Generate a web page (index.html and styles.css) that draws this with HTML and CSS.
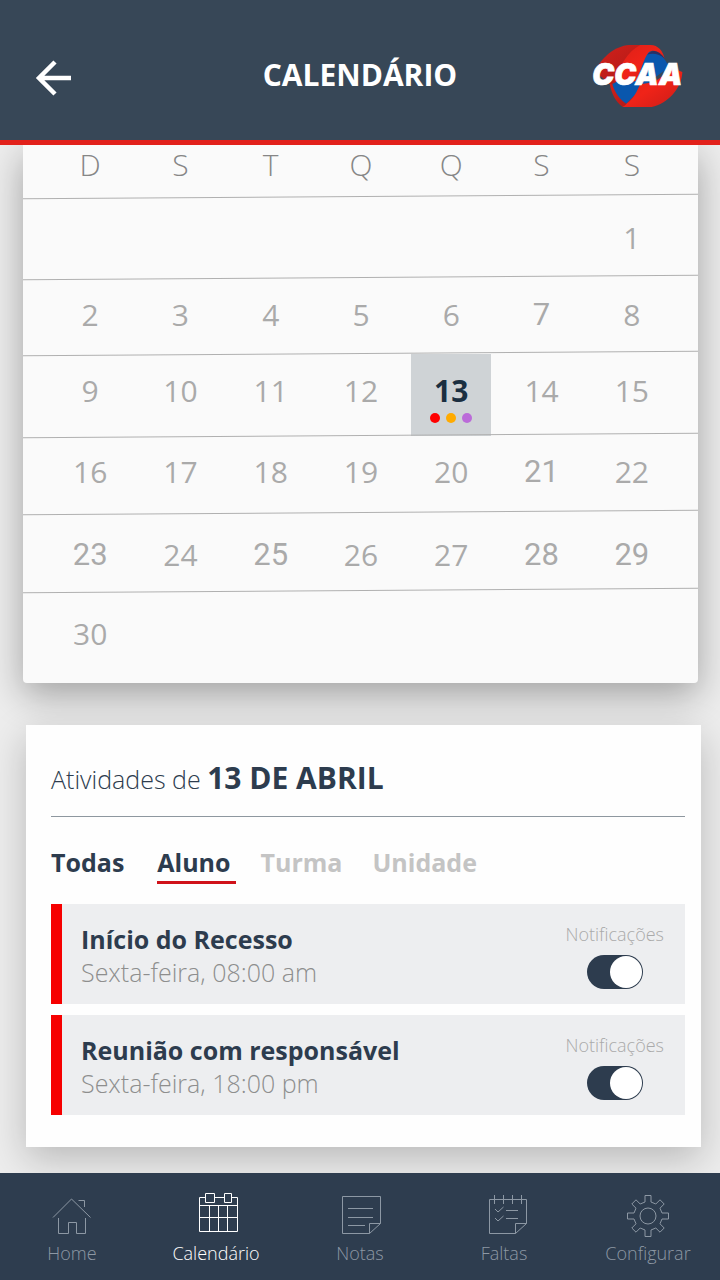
FILE: index.html
```html
<!DOCTYPE html>
<html lang="pt-BR">
<head>
<meta charset="utf-8">
<meta name="viewport" content="width=device-width, initial-scale=1">
<title>Calendário</title>
<link rel="stylesheet" href="styles.css">
</head>
<body>
<div class="app">
  <header class="topbar">
    <button class="back" type="button" aria-label="Voltar">
      <svg width="36" height="36" viewBox="0 0 36 36" fill="none" stroke="#fff" stroke-width="4.500"><path d="M36 18H4M20 2L4 18L20 34"/></svg>
    </button>
    <h1 class="topbar-title">CALENDÁRIO</h1>
    <svg class="logo" width="96" height="66" viewBox="84 60 288 198" role="img" aria-label="CCAA">
      <defs>
        <linearGradient id="red" x1="0" y1="0" x2="1" y2="1"><stop offset="0" stop-color="#d92018"/><stop offset=".5" stop-color="#f02318"/><stop offset="1" stop-color="#c91d18"/></linearGradient>
        <linearGradient id="dark" x1="0" y1="0" x2="1" y2="1"><stop offset="0" stop-color="#d3201a"/><stop offset="1" stop-color="#a91a18"/></linearGradient>
      </defs>
      <path fill="url(#dark)" d="M102 148C120 108 160 72 205 69H262L200 190H150Z"/>
      <path fill="url(#dark)" d="M146 185C152 215 164 240 184 254H226L240 210Z"/>
      <path fill="#0a57ad" d="M262 90C290 86 312 106 324 136L250 190L196 245C176 232 160 210 154 186L222 150Z"/>
      <path fill="#2b2f63" d="M258 98C276 80 296 84 312 110C296 96 276 92 258 98Z"/>
      <path fill="url(#red)" d="M160 178C178 130 200 88 238 69H268C292 69 306 88 311 110C298 88 276 80 262 92C248 108 240 150 224 178Z"/>
      <path fill="url(#red)" d="M324 134L364 150C362 200 320 245 272 255H184C190 253 194 250 198 244C220 228 228 206 238 186C262 184 300 182 324 134Z"/>
      <text class="logo-text" x="94" y="188">CCAA</text>
    </svg>
  </header>

  <main class="content">
    <section class="calendar" aria-label="Abril">
      <table class="month">
        <thead>
          <tr><th>D</th><th>S</th><th>T</th><th>Q</th><th>Q</th><th>S</th><th>S</th></tr>
        </thead>
        <tbody>
          <tr class="tall"><td></td><td></td><td></td><td></td><td></td><td></td><td>1</td></tr>
          <tr class="short"><td>2</td><td>3</td><td>4</td><td>5</td><td>6</td><td class="alt">7</td><td>8</td></tr>
          <tr class="current"><td>9</td><td>10</td><td>11</td><td>12</td><td class="selected"><div class="day">13<span class="dots"><i class="dot red"></i><i class="dot amber"></i><i class="dot purple"></i></span></div></td><td>14</td><td>15</td></tr>
          <tr class="high"><td>16</td><td>17</td><td>18</td><td>19</td><td>20</td><td class="alt">21</td><td>22</td></tr>
          <tr class="low"><td class="alt">23</td><td>24</td><td class="alt">25</td><td>26</td><td>27</td><td class="alt">28</td><td class="alt">29</td></tr>
          <tr class="last"><td>30</td><td></td><td></td><td></td><td></td><td></td><td></td></tr>
        </tbody>
      </table>
    </section>

    <section class="activities">
      <h2 class="activities-title">Atividades de <strong>13 DE ABRIL</strong></h2>
      <div class="tabs">
        <button class="tab all" type="button">Todas</button>
        <button class="tab active" type="button">Aluno</button>
        <button class="tab muted" type="button">Turma</button>
        <button class="tab muted" type="button">Unidade</button>
      </div>
      <ul class="events">
        <li class="event">
          <div class="event-text">
            <h3 class="event-name">Início do Recesso</h3>
            <p class="event-time">Sexta-feira, 08:00 am</p>
          </div>
          <div class="notify">
            <label class="notify-label" for="n1">Notificações</label>
            <input class="switch" type="checkbox" id="n1" checked>
          </div>
        </li>
        <li class="event">
          <div class="event-text">
            <h3 class="event-name">Reunião com responsável</h3>
            <p class="event-time">Sexta-feira, 18:00 pm</p>
          </div>
          <div class="notify">
            <label class="notify-label" for="n2">Notificações</label>
            <input class="switch" type="checkbox" id="n2" checked>
          </div>
        </li>
      </ul>
    </section>
  </main>

  <nav class="bottom-nav">
    <a class="nav-item" href="#home">
      <svg class="nav-icon" viewBox="0 0 44 44"><path d="M3 25.500L21.500 7L40.500 25.500M8.500 26V41.500H18.500V30.500H26.500V41.500H35.500V26M28.500 8.500H34.500V15"/></svg>
      <span>Home</span>
    </a>
    <a class="nav-item current-page" href="#calendario" aria-current="page">
      <svg class="nav-icon" viewBox="0 0 44 44"><path d="M11 5.500H5.500V39.500H43.500V5.500H37.500M20.500 5.500H30.500M11.500 1.500H20.500V10.500H11.500ZM30.500 1.500H37.500V10.500H30.500ZM5.500 13.500H43.500M5.500 25.500H43.500M15.500 13.500V39.500M24.500 13.500V39.500M33.500 13.500V39.500"/></svg>
      <span>Calendário</span>
    </a>
    <a class="nav-item" href="#notas">
      <svg class="nav-icon" viewBox="0 0 44 44"><path d="M42.500 31.500V4.500H4.500V41.500H31.500L42.500 31.500H31.500V41.500M10 16.500H35M10 25.500H35M10 33.500H27"/></svg>
      <span>Notas</span>
    </a>
    <a class="nav-item" href="#faltas">
      <svg class="nav-icon" viewBox="0 0 44 44"><path d="M44.500 31.500V7.500H7.500V41.500H33.500L44.500 31.500H33.500V41.500M12.500 3V12M21.500 3V12M30.500 3V12M39.500 3V12M13 17L16 20L21.500 15M13 26L16 29L21.500 24M24 18.500H36M24 26.500H36"/></svg>
      <span>Faltas</span>
    </a>
    <a class="nav-item" href="#configurar">
      <svg class="nav-icon" viewBox="0 0 44 44"><g transform="translate(22 24)"><path d="M-3 -14V-20.500H3V-14L7.800 -12L12 -16.200L16.200 -12L12 -7.800L14 -3H20.500V3H14L12 7.800L16.200 12L12 16.200L7.800 12L3 14V20.500H-3V14L-7.800 12L-12 16.200L-16.200 12L-12 7.800L-14 3H-20.500V-3H-14L-12 -7.800L-16.200 -12L-12 -16.200L-7.800 -12Z"/><circle r="8"/></g></svg>
      <span>Configurar</span>
    </a>
  </nav>
</div>
</body>
</html>
```

FILE: styles.css
```css
* { box-sizing: border-box; }

body {
  margin: 0;
  background: #ededed;
  font-family: "Open Sans", "Noto Sans", sans-serif;
  color: #2d3c4e;
}

h1, h2, h3, p, ul { margin: 0; padding: 0; }

button {
  border: 0;
  padding: 0;
  background: none;
  font: inherit;
  color: inherit;
  cursor: pointer;
}

.app {
  min-height: 100vh;
  display: flex;
  flex-direction: column;
}

/* Header */
.topbar {
  position: relative;
  z-index: 1;
  display: grid;
  grid-template-columns: 1fr auto 1fr;
  align-items: center;
  height: 145px;
  padding: 10px 35px 0 35px;
  background: #374757;
  border-bottom: 5px solid #e2211b;
  color: #fff;
}
.back { justify-self: start; height: 36px; margin-top: 6px; }
.back svg { display: block; }
.topbar-title { font-size: 30px; line-height: 40px; font-weight: 700; }
.logo { justify-self: end; }
.logo-text {
  font-family: Inter, "Liberation Sans", sans-serif;
  font-size: 88px;
  font-weight: 900;
  font-style: italic;
  fill: #fff;
  stroke: #fff;
  stroke-width: 2;
}

.content {
  flex: 1;
  display: flex;
  flex-direction: column;
  gap: 42px;
  padding: 0 19px 26px 23px;
}

/* Month */
.calendar {
  margin-right: 3px;
  padding: 0 21px 0 22px;
  background: #fafafa;
  border-radius: 0 0 4px 4px;
  box-shadow: 0 12px 36px rgba(0, 0, 0, 0.32);
}
.month {
  width: 100%;
  table-layout: fixed;
  border-collapse: collapse;
  font-size: 30px;
  line-height: 36px;
  color: #aaa;
  text-align: center;
}
.month tr { position: relative; height: 77px; }
.month th, .month td { padding: 0; }
.month th { padding-bottom: 12px; font-weight: 300; color: #868686; }
.month thead tr { height: 52px; }
.month .tall { height: 81px; }
.month .short { height: 76px; }
.month .short td { padding-bottom: 2px; }
.month .current { height: 82px; }
.month .current td { padding-bottom: 8px; }
.month .high td { padding-bottom: 6px; }
.month .low { height: 78px; }
.month .low td { padding-top: 6px; }
.month .last { height: 92px; }
.month .last td { padding-bottom: 6px; }
.month tr:not(.last) > :first-child::after {
  content: "";
  position: absolute;
  left: -22px;
  right: -21px;
  bottom: 0;
  height: 1px;
  background: #b0b0b0;
  transform: skewY(-0.4deg);
}
.month .alt { font-family: Roboto, sans-serif; font-size: 31px; }
.month .current .selected { padding: 0; font-weight: 700; color: #1b2f41; }
.day {
  display: flex;
  flex-direction: column;
  align-items: center;
  justify-content: center;
  gap: 4px;
  width: 80px;
  height: 82px;
  margin: 0 auto;
  padding-top: 6px;
  background: #cfd3d6;
}
.dots { display: flex; gap: 6px; }
.dot { width: 10px; height: 10px; border-radius: 50%; }
.red { background: #f00; }
.amber { background: #ffab00; }
.purple { background: #bb6bd9; }

/* Activities */
.activities {
  margin-left: 3px;
  padding: 31px 16px 32px 25px;
  background: #fefefe;
  box-shadow: 0 12px 36px rgba(0, 0, 0, 0.22);
}
.activities-title {
  padding-bottom: 15px;
  border-bottom: 1px solid #8e979f;
  font-size: 25px;
  line-height: 44px;
  font-weight: 300;
}
.activities-title strong { font-size: 30px; font-weight: 700; }
.tabs {
  display: flex;
  gap: 25px;
  margin: 26px 0 20px;
  font-size: 25px;
  line-height: 38px;
  font-weight: 700;
}
.tab { height: 41px; padding-bottom: 1px; border-bottom: 3px solid transparent; }
.all { margin-right: 8px; }
.active { padding-right: 5px; border-color: #d0121a; }
.muted { color: #c4c4c4; }
.muted + .muted { margin-left: 5px; }

.events { display: grid; gap: 11px; list-style: none; }
.event {
  display: flex;
  justify-content: space-between;
  height: 100px;
  padding: 18px 21px 0 19px;
  border-left: 11px solid #f60000;
  background: #edeef0;
}
.event-name { font-size: 25px; line-height: 35px; font-weight: 700; }
.event-time { font-size: 25px; line-height: 30px; font-weight: 300; color: #8e8e8e; }
.notify { display: flex; flex-direction: column; align-items: center; gap: 9px; }
.notify-label { font-size: 18px; line-height: 24px; font-weight: 300; color: #aaa; }
.switch {
  appearance: none;
  display: flex;
  justify-content: flex-start;
  align-items: center;
  width: 56px;
  height: 34px;
  margin: 0;
  padding: 1px;
  border-radius: 17px;
  background: #9aa3ab;
}
.switch::before {
  content: "";
  width: 32px;
  height: 32px;
  border-radius: 50%;
  background: #fff;
}
.switch:checked { justify-content: flex-end; background: #2d3c4e; }

/* Bottom navigation */
.bottom-nav {
  position: relative;
  display: grid;
  grid-template-columns: repeat(5, 1fr);
  height: 107px;
  padding-top: 19px;
  background: #2e3d4f;
}
.nav-item {
  display: flex;
  flex-direction: column;
  align-items: center;
  gap: 5px;
  font-size: 18px;
  line-height: 24px;
  font-weight: 300;
  color: #8d98a4;
  text-decoration: none;
}
.nav-icon {
  width: 44px;
  height: 44px;
  overflow: visible;
  fill: none;
  stroke: currentColor;
  stroke-width: 1;
}
.current-page { color: #fff; }
```
